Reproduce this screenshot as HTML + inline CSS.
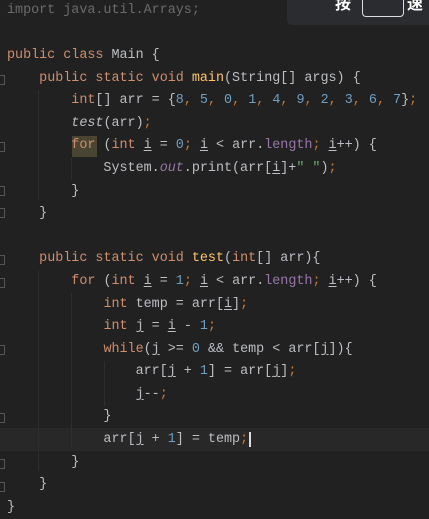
<!DOCTYPE html>
<html><head><meta charset="utf-8"><style>
html,body{margin:0;padding:0;width:429px;height:512px;overflow:hidden;background:#212121;}
.code{position:absolute;left:7px;top:0px;font-family:"Liberation Mono",monospace;font-size:13.4px;line-height:22.58px;color:#bcbec4;white-space:pre;}
.k{color:#cf8e6d}.n{color:#6f9fc2}.m{color:#ffc66d}.p{color:#9876aa}.s{color:#6aab73}.c{color:#6b6b6b}.o{color:#cc7832}
.u{text-decoration:underline;text-underline-offset:2px}
.it{font-style:italic}
.hl{position:absolute;left:0;width:429px;top:428px;height:23px;background:#282828;}
.g{position:absolute;width:1px;background:#2e2e2e;}
.ov{position:absolute;left:287px;top:-6px;width:150px;height:31px;background:#2a2c30;border-radius:5px;}
.ov span{position:absolute;color:#fff;font-family:"Noto Sans CJK SC",sans-serif;font-size:16px;font-weight:bold;top:-4px}
.box{position:absolute;left:362px;top:-6px;width:40px;height:21px;border:1.5px solid #ddd;border-radius:4px;}
.f{position:absolute;left:0;width:4px;height:8px;border:1px solid #555;border-left:none;}
.fc{background:#c8b26a;opacity:.25;position:absolute;left:72px;top:136px;width:25px;height:21px;}
</style></head><body>
<div class="hl"></div>
<div class="fc"></div>
<div class="g" style="left:38px;top:90px;height:110px"></div>
<div class="g" style="left:71px;top:158px;height:22px"></div>
<div class="g" style="left:38px;top:271px;height:200px"></div>
<div class="g" style="left:71px;top:293px;height:155px"></div>
<div class="g" style="left:104px;top:361px;height:45px"></div>
<div class="f" style="top:75px"></div>
<div class="f" style="top:142px"></div>
<div class="f" style="top:186px"></div>
<div class="f" style="top:208px"></div>
<div class="f" style="top:255px"></div>
<div class="f" style="top:278px"></div>
<div class="f" style="top:345px"></div>
<div class="f" style="top:413px"></div>
<div class="f" style="top:459px"></div>
<div class="f" style="top:482px"></div>
<div class="code"><span class="c">import java.util.Arrays;</span>

<span class="k">public class</span> Main {
    <span class="k">public static void</span> <span class="m">main</span>(String[] args) {
        <span class="k">int</span>[] arr = {<span class="n">8</span><span class="o">,</span> <span class="n">5</span><span class="o">,</span> <span class="n">0</span><span class="o">,</span> <span class="n">1</span><span class="o">,</span> <span class="n">4</span><span class="o">,</span> <span class="n">9</span><span class="o">,</span> <span class="n">2</span><span class="o">,</span> <span class="n">3</span><span class="o">,</span> <span class="n">6</span><span class="o">,</span> <span class="n">7</span>}<span class="o">;</span>
        <span class="it">test</span>(arr)<span class="o">;</span>
        <span class="k">for</span> (<span class="k">int</span> <span class="u">i</span> = <span class="n">0</span><span class="o">;</span> <span class="u">i</span> &lt; arr.<span class="p">length</span><span class="o">;</span> <span class="u">i</span>++) {
            System.<span class="p it">out</span>.print(arr[<span class="u">i</span>]+<span class="s">" "</span>)<span class="o">;</span>
        }
    }

    <span class="k">public static void</span> <span class="m">test</span>(<span class="k">int</span>[] arr){
        <span class="k">for</span> (<span class="k">int</span> <span class="u">i</span> = <span class="n">1</span><span class="o">;</span> <span class="u">i</span> &lt; arr.<span class="p">length</span><span class="o">;</span> <span class="u">i</span>++) {
            <span class="k">int</span> temp = arr[<span class="u">i</span>]<span class="o">;</span>
            <span class="k">int</span> <span class="u">j</span> = <span class="u">i</span> - <span class="n">1</span><span class="o">;</span>
            <span class="k">while</span>(<span class="u">j</span> &gt;= <span class="n">0</span> &amp;&amp; temp &lt; arr[<span class="u">j</span>]){
                arr[<span class="u">j</span> + <span class="n">1</span>] = arr[<span class="u">j</span>]<span class="o">;</span>
                <span class="u">j</span>--<span class="o">;</span>
            }
            arr[<span class="u">j</span> + <span class="n">1</span>] = temp<span class="o">;</span><span style="border-left:2px solid #ddd;margin-left:1px"></span>
        }
    }
}</div>
<div class="ov"><span style="left:48px">按</span><span style="left:120px">速</span></div>
<div class="box"></div>
</body></html>
